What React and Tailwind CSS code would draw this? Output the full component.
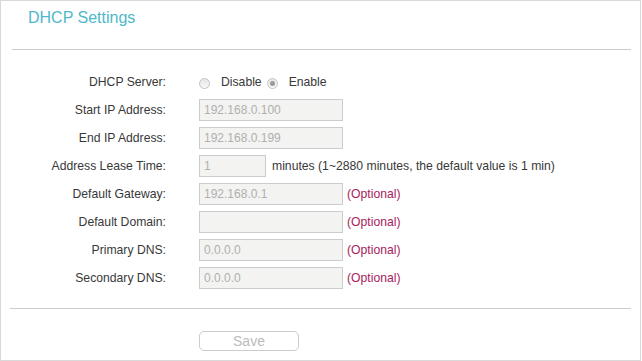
import React from 'react';

const Radio = ({ checked }) => (
  <span className="mt-[3px] flex h-[11px] w-[11px] shrink-0 items-center justify-center rounded-full border border-[#c4c4c4] bg-gradient-to-b from-[#e6e6e6] to-[#f8f8f8]">
    {checked && <span className="h-[5px] w-[5px] rounded-full bg-[#9a9a9a]" />}
  </span>
);

const Field = ({ label, children }) => (
  <div className="flex h-[22px] items-center">
    <div className="w-[165px] text-right">{label}</div>
    <div className="ml-[33px] flex items-center">{children}</div>
  </div>
);

const TextBox = ({ value = '', width = 'w-[144px]' }) => (
  <input
    readOnly
    value={value}
    className={`h-[22px] ${width} border border-[#cccccc] bg-[#f3f3f1] px-[4px] text-[12px] text-[#b0b0b0] outline-none`}
  />
);

const Optional = () => <span className="ml-[4px] text-[#a8215b]">(Optional)</span>;

export default function App() {
  return (
    <div className="h-[361px] w-[641px] border border-[#d9d9d9] bg-white font-['Liberation_Sans',Arial,sans-serif] text-[12.2px] text-[#383838]">
      {/* Title */}
      <h2 className="pl-[27px] pt-[8px] text-[16px] leading-[18px] text-[#4fb8c9]">DHCP Settings</h2>
      <div className="ml-[11px] mt-[22px] h-px w-[619px] bg-[#cccccc]" />

      {/* Form */}
      <div className="mt-[21px] flex flex-col gap-[6px]">
        <Field label="DHCP Server:">
          <Radio />
          <span className="ml-[11px]">Disable</span>
          <span className="ml-[5px]"><Radio checked /></span>
          <span className="ml-[11px]">Enable</span>
        </Field>
        <Field label="Start IP Address:">
          <TextBox value="192.168.0.100" />
        </Field>
        <Field label="End IP Address:">
          <TextBox value="192.168.0.199" />
        </Field>
        <Field label="Address Lease Time:">
          <TextBox value="1" width="w-[67px]" />
          <span className="ml-[6px]">minutes (1~2880 minutes, the default value is 1 min)</span>
        </Field>
        <Field label="Default Gateway:">
          <TextBox value="192.168.0.1" />
          <Optional />
        </Field>
        <Field label="Default Domain:">
          <TextBox />
          <Optional />
        </Field>
        <Field label="Primary DNS:">
          <TextBox value="0.0.0.0" />
          <Optional />
        </Field>
        <Field label="Secondary DNS:">
          <TextBox value="0.0.0.0" />
          <Optional />
        </Field>
      </div>

      <div className="ml-[9px] mt-[19px] h-px w-[621px] bg-[#cccccc]" />

      <div className="mt-[22px] pl-[198px]">
        <button className="h-[20px] w-[100px] rounded-[5px] border border-[#cccccc] bg-white text-[14px] leading-[18px] text-[#bbbbbb]">
          Save
        </button>
      </div>
    </div>
  );
}
